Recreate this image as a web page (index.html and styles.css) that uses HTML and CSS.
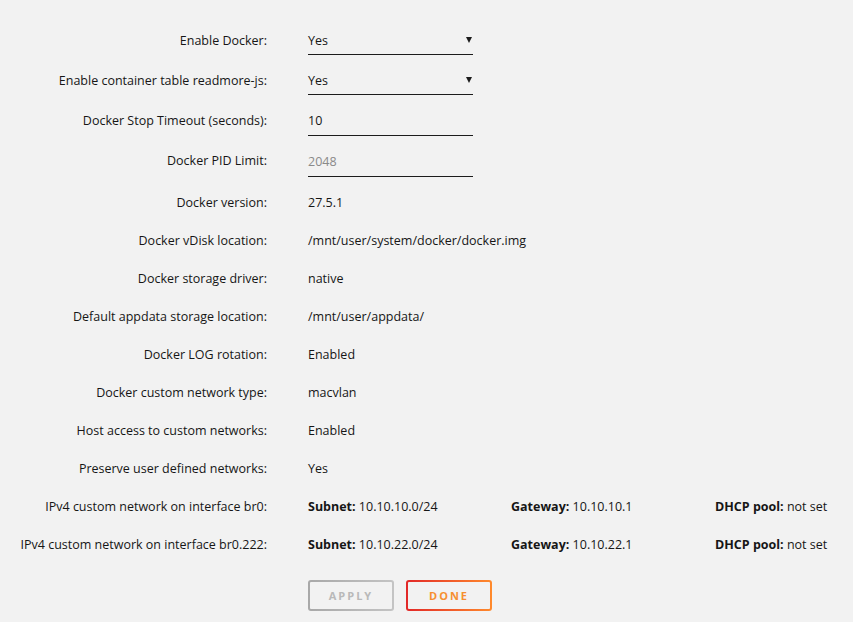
FILE: index.html
```html
<!DOCTYPE html>
<html>
<head>
<meta charset="utf-8">
<link rel="stylesheet" href="styles.css">
</head>
<body>
<div class="form">
  <div class="row tall">
    <div class="label">Enable Docker:</div>
    <div class="field select"><span>Yes</span><span class="caret"></span></div>
  </div>
  <div class="row tall">
    <div class="label">Enable container table readmore-js:</div>
    <div class="field select"><span>Yes</span><span class="caret"></span></div>
  </div>
  <div class="row tall">
    <div class="label">Docker Stop Timeout (seconds):</div>
    <div class="field low"><span>10</span></div>
  </div>
  <div class="row tall">
    <div class="label">Docker PID Limit:</div>
    <div class="field lower placeholder"><span>2048</span></div>
  </div>
  <div class="row gap">
    <div class="label">Docker version:</div>
    <div class="value">27.5.1</div>
  </div>
  <div class="row">
    <div class="label">Docker vDisk location:</div>
    <div class="value">/mnt/user/system/docker/docker.img</div>
  </div>
  <div class="row">
    <div class="label">Docker storage driver:</div>
    <div class="value">native</div>
  </div>
  <div class="row">
    <div class="label">Default appdata storage location:</div>
    <div class="value">/mnt/user/appdata/</div>
  </div>
  <div class="row">
    <div class="label">Docker LOG rotation:</div>
    <div class="value">Enabled</div>
  </div>
  <div class="row">
    <div class="label">Docker custom network type:</div>
    <div class="value">macvlan</div>
  </div>
  <div class="row">
    <div class="label">Host access to custom networks:</div>
    <div class="value">Enabled</div>
  </div>
  <div class="row">
    <div class="label">Preserve user defined networks:</div>
    <div class="value">Yes</div>
  </div>
  <div class="row">
    <div class="label">IPv4 custom network on interface br0:</div>
    <div class="value net">
      <span class="cell"><b>Subnet:</b> 10.10.10.0/24</span>
      <span class="cell"><b>Gateway:</b> 10.10.10.1</span>
      <span class="cell"><b>DHCP pool:</b> not set</span>
    </div>
  </div>
  <div class="row">
    <div class="label">IPv4 custom network on interface br0.222:</div>
    <div class="value net">
      <span class="cell"><b>Subnet:</b> 10.10.22.0/24</span>
      <span class="cell"><b>Gateway:</b> 10.10.22.1</span>
      <span class="cell"><b>DHCP pool:</b> not set</span>
    </div>
  </div>
  <div class="buttons">
    <div class="spacer"></div>
    <div class="btns">
      <button class="btn apply">APPLY</button>
      <button class="btn done">DONE</button>
    </div>
  </div>
</div>
</body>
</html>
```

FILE: styles.css
```css
html, body {
  margin: 0;
  padding: 0;
  background: #f2f2f2;
}
body {
  font-family: "Open Sans", "Noto Sans", sans-serif;
  font-size: 12.5px;
  color: #161616;
}
.form {
  padding-top: 20px;
}
.row {
  display: grid;
  grid-template-columns: 267px 1fr;
  column-gap: 41px;
  align-items: center;
  height: 38px;
}
.row.tall {
  height: 40px;
}
.row.gap {
  margin-top: 3px;
}
.label {
  text-align: right;
  white-space: nowrap;
}
.field {
  width: 165px;
  height: 27px;
  border-bottom: 1px solid #1c1c1c;
  display: flex;
  align-items: center;
  justify-content: space-between;
  box-sizing: content-box;
  margin-top: 1px;
}
.field.low {
  height: 28px;
  margin-top: 2px;
}
.field.lower {
  height: 29px;
  margin-top: 4px;
}
.placeholder {
  color: #8a8a8a;
}
.caret {
  width: 0;
  height: 0;
  border-left: 3px solid transparent;
  border-right: 3px solid transparent;
  border-top: 6px solid #1c1c1c;
  margin-right: 1px;
}
.value {
  white-space: nowrap;
}
.net {
  display: grid;
  grid-template-columns: 203px 204px 1fr;
}
.net b {
  font-weight: 700;
}
.buttons {
  display: grid;
  grid-template-columns: 267px 1fr;
  column-gap: 41px;
  margin-top: 17px;
}
.btns {
  display: flex;
  gap: 12px;
}
.btn {
  width: 86px;
  height: 31px;
  border-radius: 3px;
  border: 2px solid transparent;
  font-family: "Open Sans", "Noto Sans", sans-serif;
  font-weight: 700;
  font-size: 11px;
  letter-spacing: 2px;
  padding: 0;
  cursor: pointer;
}
.apply {
  color: #b9b9b9;
  background: linear-gradient(#f2f2f2, #f2f2f2) padding-box,
              linear-gradient(90deg, #a8a8a8, #c4c4c4) border-box;
}
.done {
  color: #f68f30;
  background: linear-gradient(#f2f2f2, #f2f2f2) padding-box,
              linear-gradient(90deg, #e22828, #ff8a2c) border-box;
}
```
